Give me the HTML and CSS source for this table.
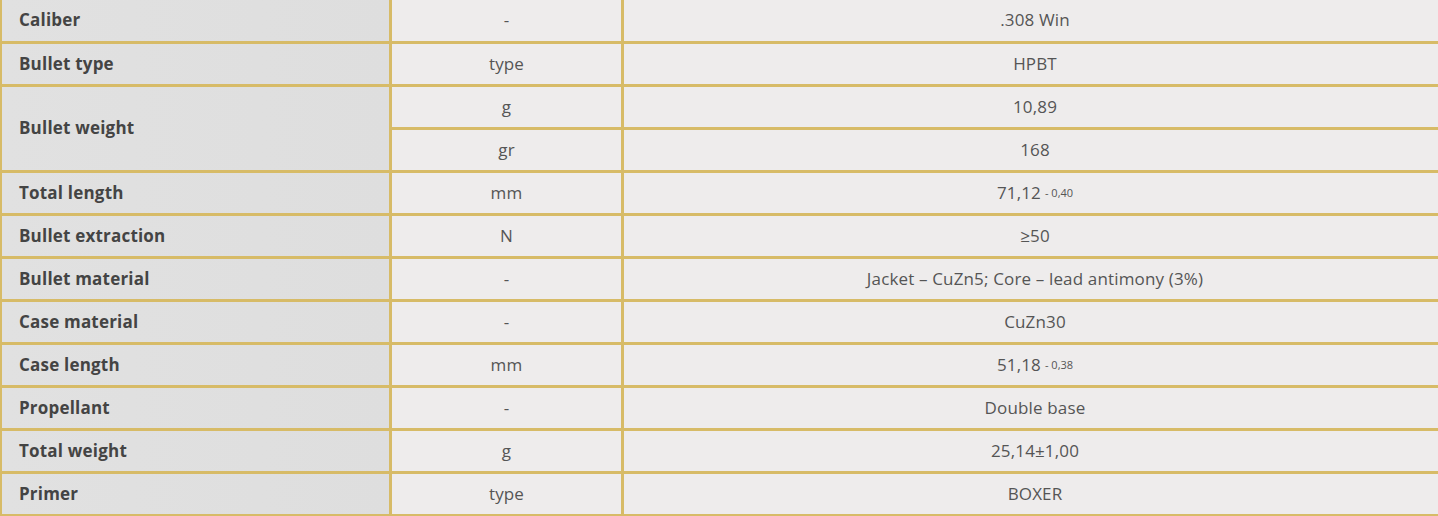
FILE: index.html
```html
<!DOCTYPE html>
<html lang="en">
<head>
<meta charset="utf-8">
<title>Specifications</title>
<link rel="stylesheet" href="styles.css">
</head>
<body>
<div class="spec">
  <div class="lbl first">Caliber</div><div class="unit first">-</div><div class="val first">.308 Win</div>
  <div class="lbl">Bullet type</div><div class="unit">type</div><div class="val">HPBT</div>
  <div class="lbl span2">Bullet weight</div><div class="unit">g</div><div class="val">10,89</div>
  <div class="unit">gr</div><div class="val">168</div>
  <div class="lbl">Total length</div><div class="unit">mm</div><div class="val">71,12<sub class="tol">- 0,40</sub></div>
  <div class="lbl">Bullet extraction</div><div class="unit">N</div><div class="val">≥50</div>
  <div class="lbl">Bullet material</div><div class="unit">-</div><div class="val">Jacket – CuZn5; Core – lead antimony (3%)</div>
  <div class="lbl">Case material</div><div class="unit">-</div><div class="val">CuZn30</div>
  <div class="lbl">Case length</div><div class="unit">mm</div><div class="val">51,18<sub class="tol">- 0,38</sub></div>
  <div class="lbl">Propellant</div><div class="unit">-</div><div class="val">Double base</div>
  <div class="lbl">Total weight</div><div class="unit">g</div><div class="val">25,14±1,00</div>
  <div class="lbl">Primer</div><div class="unit">type</div><div class="val">BOXER</div>
</div>
</body>
</html>
```
FILE: styles.css
```css
html, body {
  margin: 0;
  padding: 0;
  background: #eeecec;
}
body {
  font-family: "Open Sans", "Noto Sans", sans-serif;
  font-size: 17px;
}
.spec {
  display: grid;
  grid-template-columns: 387px 229px 1fr;
  grid-template-rows: 41px repeat(11, 40px);
  gap: 3px;
  padding: 0 0 2px 2px;
  background: #d7bb67;
  width: 1436px;
  height: 514px;
}
.spec > div {
  display: flex;
  align-items: center;
  background: #eeecec;
  color: #555;
  letter-spacing: 0.15px;
  padding-bottom: 2px;
}
.lbl {
  background: linear-gradient(90deg, #e1e1e1 0%, #dedede 100%) !important;
  color: #444 !important;
  font-weight: 700;
  padding-left: 17px;
  letter-spacing: 0.2px !important;
}
.span2 {
  grid-row: span 2;
}
.unit {
  justify-content: center;
}
.val {
  justify-content: center;
  padding-left: 8px;
}
.tol {
  font-size: 11px;
  vertical-align: -3px;
  margin-left: 4px;
  line-height: 1;
  letter-spacing: 0;
}
```
